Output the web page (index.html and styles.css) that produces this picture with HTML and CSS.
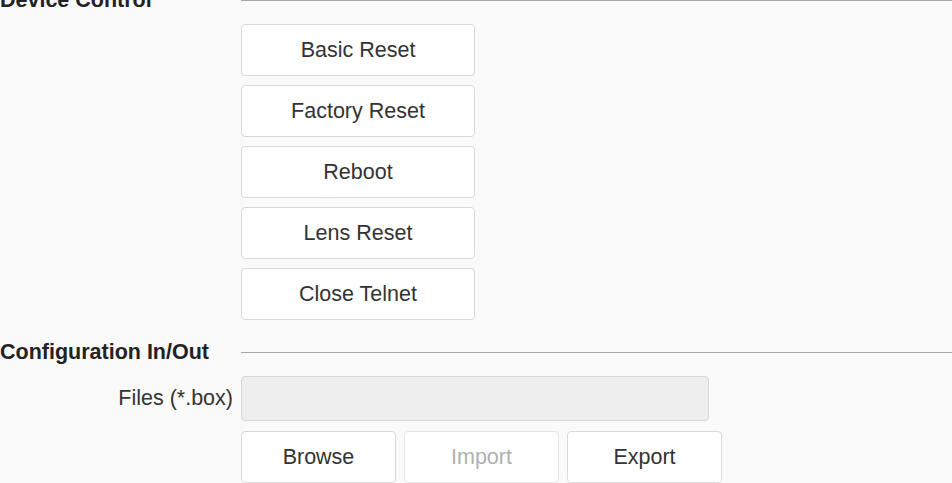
FILE: index.html
```html
<!DOCTYPE html>
<html>
<head>
<meta charset="utf-8">
<link rel="stylesheet" href="styles.css">
</head>
<body>
<div class="page">
  <section class="section first">
    <div class="heading"><span class="heading-text">Device Control</span><span class="heading-line"></span></div>
    <div class="stack">
      <button class="btn wide">Basic Reset</button>
      <button class="btn wide">Factory Reset</button>
      <button class="btn wide">Reboot</button>
      <button class="btn wide">Lens Reset</button>
      <button class="btn wide">Close Telnet</button>
    </div>
  </section>
  <section class="section second">
    <div class="heading"><span class="heading-text">Configuration In/Out</span><span class="heading-line"></span></div>
    <div class="row">
      <label class="label">Files (*.box)</label>
      <div class="file-input"></div>
    </div>
    <div class="row buttons">
      <span class="label"></span>
      <div class="btn-row">
        <button class="btn narrow">Browse</button>
        <button class="btn narrow disabled">Import</button>
        <button class="btn narrow">Export</button>
      </div>
    </div>
  </section>
</div>
</body>
</html>
```
FILE: styles.css
```css
html, body {
  margin: 0;
  padding: 0;
  background: #fafafa;
  font-family: "Liberation Sans", Arial, sans-serif;
  color: #333;
  overflow: hidden;
}
.page {
  display: flex;
  flex-direction: column;
}
.section.first {
  margin-top: -15px;
}
.section.second {
  margin-top: 17px;
}
.heading {
  display: flex;
  align-items: center;
  height: 30px;
}
.heading-text {
  width: 241px;
  flex: none;
  font-weight: bold;
  font-size: 21.5px;
  color: #222;
  white-space: nowrap;
}
.heading-line {
  flex: 1;
  height: 1px;
  background: #a8a8a8;
}
.stack {
  display: flex;
  flex-direction: column;
  gap: 9px;
  margin-top: 9px;
  padding-left: 241px;
}
.btn {
  box-sizing: border-box;
  height: 52px;
  background: #fff;
  border: 1px solid #d9d9d9;
  border-radius: 4px;
  font-family: "Liberation Sans", Arial, sans-serif;
  font-size: 21.5px;
  color: #333;
  padding: 0;
}
.btn.wide {
  width: 234px;
}
.btn.narrow {
  width: 155px;
}
.btn.disabled {
  color: #b0b0b0;
  border-color: #e6e6e6;
}
.row {
  display: flex;
  align-items: center;
  margin-top: 9px;
}
.row.buttons {
  margin-top: 10px;
}
.label {
  width: 241px;
  flex: none;
  box-sizing: border-box;
  padding-right: 8px;
  text-align: right;
  font-size: 21.5px;
  color: #333;
}
.file-input {
  box-sizing: border-box;
  width: 468px;
  height: 45px;
  background: #eeeeee;
  border: 1px solid #d6d6d6;
  border-radius: 4px;
}
.btn-row {
  display: flex;
  gap: 8px;
}
```
